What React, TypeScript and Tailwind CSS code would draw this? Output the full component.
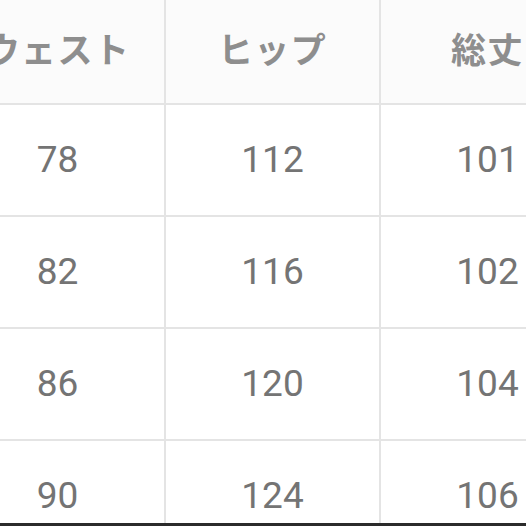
const headers = ['ウェスト', 'ヒップ', '総丈'];

const rows = [
  ['78', '112', '101'],
  ['82', '116', '102'],
  ['86', '120', '104'],
  ['90', '124', '106'],
];

export default function App() {
  return (
    <div className="w-[526px] h-[526px] overflow-hidden bg-white flex flex-col">
      <div className="h-[523px] overflow-hidden">
        <div className="ml-[-49px] mt-[-7px] w-[643px] grid grid-cols-[213px_213px_213px] gap-[2px] bg-[#e4e4e4]">
          {headers.map((h) => (
            <div
              key={h}
              className="h-[110px] bg-[#fbfbfb] flex items-center justify-center text-[35px] font-bold text-[#8e8e8e] tracking-[0.04em]"
              style={{ fontFamily: '"Noto Sans CJK JP", "Noto Sans", sans-serif' }}
            >
              {h}
            </div>
          ))}
          {rows.map((row, i) =>
            row.map((v, j) => (
              <div
                key={`${i}-${j}`}
                className="h-[110px] bg-white flex items-center justify-center text-[37px] text-[#747474]"
                style={{ fontFamily: 'Roboto, "Liberation Sans", sans-serif' }}
              >
                {v}
              </div>
            ))
          )}
        </div>
      </div>
      <div className="h-[3px] bg-[#2b2b2b]" />
    </div>
  );
}
